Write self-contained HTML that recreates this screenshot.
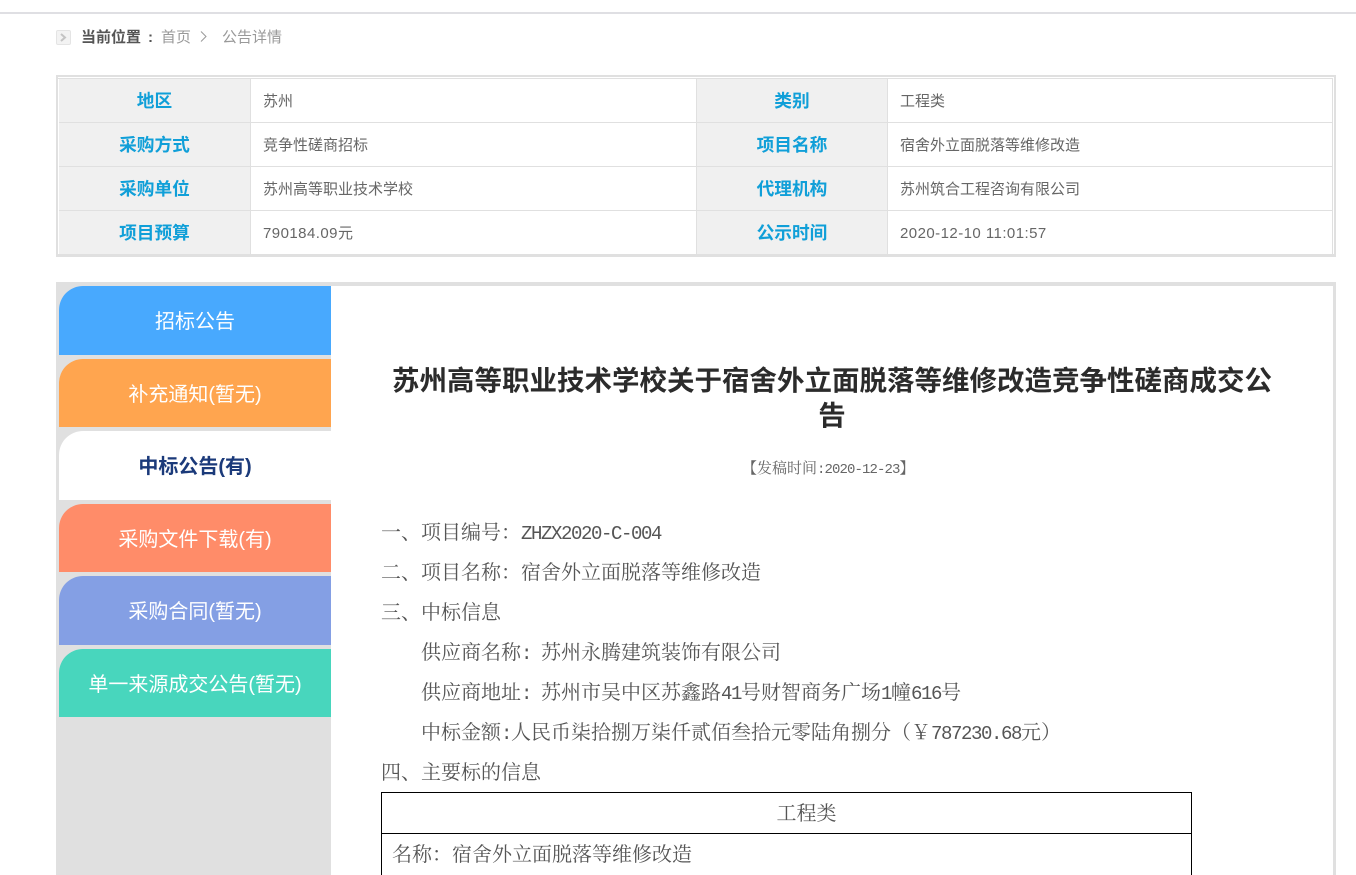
<!DOCTYPE html>
<html lang="zh-CN">
<head>
<meta charset="utf-8">
<title>公告详情</title>
<style>
html,body{margin:0;padding:0;background:#fff;width:1356px;height:875px;overflow:hidden;}
#wrap{position:relative;width:1356px;height:875px;overflow:hidden;font-family:"Liberation Sans","Noto Sans CJK SC",sans-serif;}
.a{position:absolute;white-space:nowrap;}
.topline{position:absolute;left:0;top:12px;width:1356px;height:2px;background:#dfdfe3;}
.ico{position:absolute;left:56px;top:30px;width:13px;height:13px;background:#f3f3f3;border:1px solid #e4e4e4;border-radius:2px;}
.bc{top:28px;font-size:15px;line-height:20px;color:#999;}
.info{position:absolute;left:56px;top:75px;width:1280px;height:182px;background:#e0e0e0;}
.info .w{position:absolute;left:2px;top:2px;width:1276px;height:177px;background:#fff;}
.info .l{position:absolute;left:2px;top:3px;width:1275px;height:1px;background:#e0e0e0;}
.info .c{position:absolute;box-sizing:border-box;height:44px;line-height:45px;border-right:1px solid #e0e0e0;border-bottom:1px solid #e0e0e0;}
.info .h{background:#f0f0f0;text-align:center;color:#109fd8;font-size:17.7px;font-weight:bold;}
.info .v{background:#fff;padding-left:12px;color:#666;font-size:15px;}
.ls{letter-spacing:.45px;}
.panel{position:absolute;left:56px;top:282px;width:1280px;height:593px;background:#e0e0e0;}
.main{position:absolute;left:275px;top:4px;width:1002px;height:589px;background:#fff;}
.tab{position:absolute;left:3px;width:272px;text-align:center;color:#fff;font-size:20px;border-top-left-radius:24px;}
.title{position:absolute;left:331px;top:363px;width:1002px;text-align:center;font-size:27.5px;line-height:35px;font-weight:bold;color:#2b2b2b;}
.title div{width:890px;margin:0 auto;}
.date{position:absolute;left:742px;top:458px;white-space:nowrap;font-size:15px;line-height:20px;color:#666;font-family:"Noto Serif CJK SC",serif;}
.date span{font-family:"Liberation Mono",monospace;font-size:14px;letter-spacing:-.9px;}
.p{position:absolute;white-space:nowrap;font-size:20px;line-height:28px;color:#555;font-family:"Noto Serif CJK SC",serif;}
.p span{font-family:"Liberation Mono",monospace;font-size:19px;letter-spacing:-1.4px;}
.tbl{position:absolute;left:381px;top:792px;width:809px;height:82px;border:1px solid #000;border-bottom:0;}
.tbl .r{position:absolute;left:0;top:40px;width:809px;height:1px;background:#000;}
</style>
</head>
<body>
<div id="wrap">
<div class="topline"></div>
<div class="ico"><svg width="13" height="13" viewBox="0 0 13 13" style="display:block"><path d="M4 3l4 3.5-4 3.5" fill="none" stroke="#c4c4c4" stroke-width="2"/></svg></div>
<div class="a bc" style="left:81px;font-weight:bold;color:#555;">当前位置</div>
<div class="a bc" style="left:148px;font-weight:bold;color:#555;">:</div>
<div class="a bc" style="left:161px;">首页</div>
<svg class="a" style="left:199px;top:30px;" width="9" height="13" viewBox="0 0 9 13"><path d="M2 1.5l5 5-5 5" fill="none" stroke="#999" stroke-width="1"/></svg>
<div class="a bc" style="left:222px;">公告详情</div>

<div class="info">
<div class="w"></div>
<div class="l"></div>
<div class="c h" style="left:3px;top:4px;width:192px;">地区</div>
<div class="c v" style="left:195px;top:4px;width:446px;">苏州</div>
<div class="c h" style="left:641px;top:4px;width:191px;">类别</div>
<div class="c v" style="left:832px;top:4px;width:445px;">工程类</div>
<div class="c h" style="left:3px;top:48px;width:192px;">采购方式</div>
<div class="c v" style="left:195px;top:48px;width:446px;">竞争性磋商招标</div>
<div class="c h" style="left:641px;top:48px;width:191px;">项目名称</div>
<div class="c v" style="left:832px;top:48px;width:445px;">宿舍外立面脱落等维修改造</div>
<div class="c h" style="left:3px;top:92px;width:192px;">采购单位</div>
<div class="c v" style="left:195px;top:92px;width:446px;">苏州高等职业技术学校</div>
<div class="c h" style="left:641px;top:92px;width:191px;">代理机构</div>
<div class="c v" style="left:832px;top:92px;width:445px;">苏州筑合工程咨询有限公司</div>
<div class="c h" style="left:3px;top:136px;width:192px;height:43px;border-bottom:0;">项目预算</div>
<div class="c v" style="left:195px;top:136px;width:446px;height:43px;border-bottom:0;"><span class="ls">790184.09</span>元</div>
<div class="c h" style="left:641px;top:136px;width:191px;height:43px;border-bottom:0;">公示时间</div>
<div class="c v" style="left:832px;top:136px;width:445px;height:43px;border-bottom:0;"><span class="ls">2020-12-10 11:01:57</span></div>
</div>

<div class="panel">
<div class="main"></div>
<div class="tab" style="top:4px;height:69px;line-height:73px;background:#48a9fe;">招标公告</div>
<div class="tab" style="top:77px;height:68px;line-height:72px;background:#ffa54f;">补充通知(暂无)</div>
<div class="tab" style="top:149px;height:69px;line-height:73px;background:#fff;color:#1b3a7a;font-weight:bold;">中标公告(有)</div>
<div class="tab" style="top:222px;height:68px;line-height:72px;background:#ff8c69;">采购文件下载(有)</div>
<div class="tab" style="top:294px;height:69px;line-height:73px;background:#849fe4;">采购合同(暂无)</div>
<div class="tab" style="top:367px;height:68px;line-height:72px;background:#48d6bd;">单一来源成交公告(暂无)</div>
</div>

<div class="title"><div>苏州高等职业技术学校关于宿舍外立面脱落等维修改造竞争性磋商成交公告</div></div>
<div class="date">【发稿时间<span>:2020-12-23</span>】</div>

<div class="p" style="left:381px;top:517px;">一、项目编号：<span>ZHZX2020-C-004</span></div>
<div class="p" style="left:381px;top:557px;">二、项目名称：宿舍外立面脱落等维修改造</div>
<div class="p" style="left:381px;top:597px;">三、中标信息</div>
<div class="p" style="left:421px;top:637px;">供应商名称<span>: </span>苏州永腾建筑装饰有限公司</div>
<div class="p" style="left:421px;top:677px;">供应商地址<span>: </span>苏州市吴中区苏鑫路<span>41</span>号财智商务广场<span>1</span>幢<span>616</span>号</div>
<div class="p" style="left:421px;top:717px;">中标金额<span>:</span>人民币柒拾捌万柒仟贰佰叁拾元零陆角捌分（￥<span>787230.68</span>元）</div>
<div class="p" style="left:381px;top:757px;">四、主要标的信息</div>
<div class="tbl"><div class="r"></div></div>
<div class="p" style="left:382px;top:798px;width:849px;text-align:center;">工程类</div>
<div class="p" style="left:392px;top:839px;">名称：宿舍外立面脱落等维修改造</div>
</div>
</body>
</html>
